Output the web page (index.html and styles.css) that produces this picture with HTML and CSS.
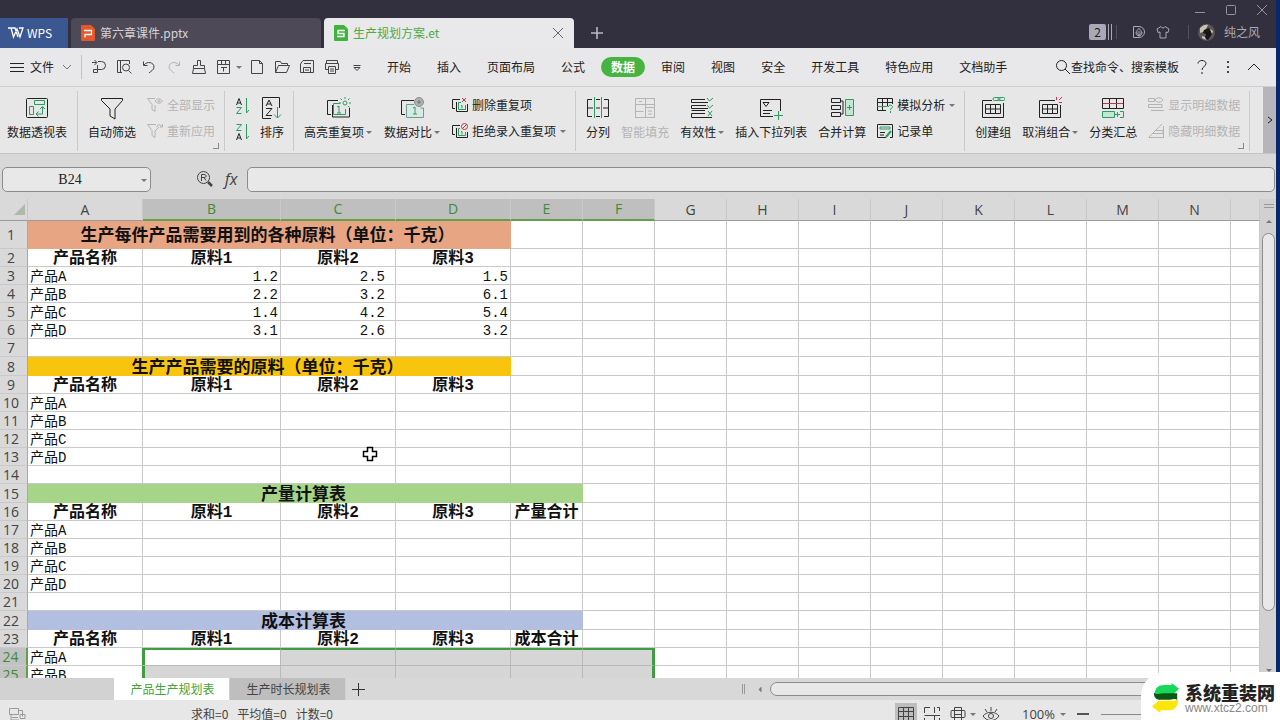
FILE: index.html
```html
<!DOCTYPE html>
<html lang="zh-CN">
<head>
<meta charset="utf-8">
<title>生产规划方案.et</title>
<link rel="stylesheet" href="styles.css">
</head>
<body>
<div class="app">
<header class="titlebar">
  <nav class="doctabs">
    <button class="doctab home"><svg class="i" width="17" height="14" viewBox="0 0 17 14"><path class="logo" d="M1 2h3l2.500 9L10 3l3 8 3-9h-4M4 2h4l3 9"/></svg>WPS</button>
    <button class="doctab"><svg width="14" height="16" viewBox="0 0 14 16"><path fill="#e5582b" d="M1 0h9l4 4v11a1 1 0 0 1-1 1H1a1 1 0 0 1-1-1V1a1 1 0 0 1 1-1z"/><path fill="none" stroke="#fff" stroke-width="1.300" d="M3 5.500h7.500v4H4v3"/></svg>第六章课件.pptx</button>
    <div class="doctab active"><svg width="14" height="16" viewBox="0 0 14 16"><path fill="#3eb43c" d="M1 0h9l4 4v11a1 1 0 0 1-1 1H1a1 1 0 0 1-1-1V1a1 1 0 0 1 1-1z"/><path fill="none" stroke="#fff" stroke-width="1.300" d="M11 5.500H4v3h6v3H3"/></svg><span class="grow">生产规划方案.et</span><button aria-label="关闭"><svg class="i" width="12" height="12" viewBox="0 0 12 12"><path d="M1 1l10 10M11 1L1 11"/></svg></button></div>
    <button class="newtab" aria-label="新建"><svg class="i" width="14" height="14" viewBox="0 0 14 14"><path stroke-width="1.600" d="M7 1v12M1 7h12"/></svg></button>
  </nav>
  <div class="titleright">
    <div class="winbtns">
      <button aria-label="最小化"><svg class="i" width="12" height="12" viewBox="0 0 12 12"><path d="M1 8.500h10"/></svg></button>
      <button aria-label="最大化"><svg class="i" width="12" height="12" viewBox="0 0 12 12"><rect x="1.500" y="1.500" width="9" height="9" rx="1"/></svg></button>
      <button aria-label="关闭窗口"><svg class="i" width="12" height="12" viewBox="0 0 12 12"><path d="M1 1l10 10M11 1L1 11"/></svg></button>
    </div>
    <div class="account">
      <span class="badge">2</span><svg class="i bars" width="5" height="16" viewBox="0 0 5 16"><path d="M1.500 0v16M4.500 0v16"/></svg>
      <i class="vline"></i>
      <button class="docer" aria-label="稻壳"><svg class="i" width="14" height="14" viewBox="0 0 14 14"><path d="M1.500 1.500H7a5.500 5.500 0 0 1 0 11H1.500zM7 3.500c3 2 3 5 0 7c-3-2-3-5 0-7M7 6v5M4 7c0 2 1 4 3 4s3-2 3-4"/></svg></button>
      <button aria-label="皮肤"><svg class="i" width="14" height="14" viewBox="0 0 14 14"><path d="M5 1.500L1 4l1 3.500 2-.5v6h6V7l2 .5L13 4 9 1.500C8 3.500 6 3.500 5 1.500z"/></svg></button>
      <i class="vline wide"></i>
      <svg class="avatar" width="17" height="17" viewBox="0 0 17 17"><circle cx="8.500" cy="8.500" r="8.500" fill="#5a5756"/><path fill="#c8c2b4" d="M2 4c3-3 6-4 8-3L8 5 5 8 2 9z"/><path fill="#171619" d="M6 6l5-2 3 6-4 6-3-2 1-4-3-1z"/><path fill="#c9c9b4" d="M4 12l3 1 1 3-4-2zM12 5l3 2-1 3z"/></svg>
      <span>纯之风</span>
    </div>
  </div>
</header>
<div class="menubar">
  <button class="file"><svg class="i" width="14" height="11" viewBox="0 0 14 11"><path d="M0 1.500h14M0 5.500h14M0 9.500h14"/></svg>文件<svg class="i thin" width="10" height="6" viewBox="0 0 10 6"><path d="M1 1l4 4 4-4"/></svg></button>
  <div class="quick">
    <button aria-label="转换"><svg class="i" width="16" height="16" viewBox="0 0 16 16"><path d="M1 3.500h4.500M3.500 1l2.500 2.500L3.500 6M7 2.500h3.500a4 4 0 0 1 0 8H6.500V6M6.500 10.500v3h-4v-3h4"/></svg></button>
    <button aria-label="打印预览"><svg class="i" width="16" height="16" viewBox="0 0 16 16"><path d="M6 13.500H1.500v-12h12V5M4.500 2v11M12.500 11.500l3 3"/><circle cx="10" cy="8.500" r="3.500"/></svg></button>
    <button aria-label="撤销"><svg class="i" width="16" height="16" viewBox="0 0 16 16"><path d="M2.500 2.500v4h4M3 6c3-4 10-3 10 2 0 3-3 4-5 6"/></svg></button>
    <button class="dim" aria-label="恢复"><svg class="i" width="16" height="16" viewBox="0 0 16 16"><path d="M13.500 2.500v4h-4M13 6C10 2 3 3 3 8c0 3 3 4 5 6"/></svg></button>
    <button aria-label="格式刷"><svg class="i" width="16" height="16" viewBox="0 0 16 16"><path d="M6.500 6.500v-5h3v5h4v3h-11v-3zM2.500 9.500l-1 5h13l-1-5"/></svg></button>
    <button class="drop" aria-label="表格格式"><svg class="i" width="16" height="16" viewBox="0 0 16 16"><path d="M1.500 1.500h12v13h-12zM1.500 5.500h12M5.500 1.500v4M9.500 1.500v4M5 8.500h6M7.500 8.500v4"/></svg><b class="caret"></b></button>
    <button aria-label="新建文件"><svg class="i" width="16" height="16" viewBox="0 0 16 16"><path d="M1.500 1.500h8l3 3v10h-11zM9.500 1.500v3h3"/></svg></button>
    <button aria-label="打开"><svg class="i" width="16" height="16" viewBox="0 0 16 16"><path d="M.5 13.500v-11h5l1 2h6v2M.5 13.500l3-7h11l-3 7z"/></svg></button>
    <button aria-label="保存"><svg class="i" width="16" height="16" viewBox="0 0 16 16"><path d="M.5 5L3 1.500h10.500v12H.5zM3.500 13.500v-5h7v5M4 4.500h7M5 11h4"/></svg></button>
    <button aria-label="打印"><svg class="i" width="16" height="16" viewBox="0 0 16 16"><path d="M1.500 4.500v-3h11v3M3 10.500H.5v-6h13v6H11M3.500 7.500h7v7h-7zM5 10h4M5 12h4"/></svg></button>
    <button aria-label="更多"><svg class="i" width="16" height="16" viewBox="0 0 16 16"><path d="M3.500 6.500h7M4 8.500l3 3 3-3z"/></svg></button>
  </div>
  <nav class="menus"><button>开始</button><button>插入</button><button>页面布局</button><button>公式</button><button class="on">数据</button><button>审阅</button><button>视图</button><button>安全</button><button>开发工具</button><button>特色应用</button><button>文档助手</button></nav>
  <label class="search"><svg class="i" width="16" height="16" viewBox="0 0 16 16"><circle cx="6.500" cy="6.500" r="5"/><path d="M10 10l5 5"/></svg><input type="text" placeholder="查找命令、搜索模板" aria-label="查找命令"></label>
  <div class="menuend">
    <button aria-label="帮助"><svg class="i" width="14" height="16" viewBox="0 0 14 16"><path d="M3 4.500c0-4 8-4 8 0 0 3-4 3-4 6.500M7 13v2"/></svg></button>
    <button aria-label="菜单"><svg width="14" height="14" viewBox="0 0 14 14"><path fill="#444" d="M6 1h2v2H6zM6 6h2v2H6zM6 11h2v2H6z"/></svg></button>
    <button aria-label="收起"><svg class="i" width="14" height="8" viewBox="0 0 14 8"><path d="M1 7l6-6 6 6"/></svg></button>
  </div>
</div>
<div class="ribbon">
  <section class="group first">
    <button class="big"><svg class="i" width="24" height="24" viewBox="0 0 24 24"><rect x="1.500" y="2.500" width="21" height="19" rx="1"/><path class="g" d="M9.500 4.500h10v4h-10zM4.500 10.500h4v8h-4zM17.500 11v7h-6M15 13l2.500-2.500L20 13M13.500 15.500L11 18l2.500 2.500"/></svg><span>数据透视表</span></button>
  </section>
  <section class="group corner">
    <button class="big"><svg class="i" width="24" height="24" viewBox="0 0 24 24"><path d="M1.500 2.500h21v2L15 13v10l-5-3v-7L1.500 4.500z"/></svg><span>自动筛选</span></button>
    <div class="pair dim">
      <button><svg class="i" width="16" height="16" viewBox="0 0 16 16"><path d="M8 1.500H.5L5 7.500v5l3 2V8M8 4c2-3 5-3 7.500 0-2 3-5 3-7.500 0"/><circle cx="12" cy="4" r="1"/></svg>全部显示</button>
      <button><svg class="i" width="16" height="16" viewBox="0 0 16 16"><path d="M9 1.500H.5L5 7.500v5l3 2V8l4-4M10 4c0-3 4-3 5 0M15.500 1v3H13"/></svg>重新应用</button>
    </div>
  </section>
  <section class="group">
    <div class="pair icons">
      <button aria-label="升序"><svg class="i" width="14" height="18" viewBox="0 0 14 18"><path d="M1.500 8L4 1.500 6.500 8M2.500 6h3"/><path class="g" d="M1.500 10.500h5l-5 6h5M11.500 1v15L14 13"/></svg></button>
      <button aria-label="降序"><svg class="i" width="14" height="18" viewBox="0 0 14 18"><path class="g" d="M1.500 1.500h5l-5 6h5M11.500 1v15L14 13"/><path d="M1.500 17L4 10.500 6.500 17M2.500 15h3"/></svg></button>
    </div>
    <button class="big"><svg class="i" width="24" height="24" viewBox="0 0 24 24"><path d="M11 22.500H2.500v-21h17V12M6 10L9 4l3 6M7 8h4M6 12.500h6l-6 7h6"/><path class="g" d="M17.500 11v11M14 18.500l3.500 3.500 3.500-3.500"/></svg><span>排序</span></button>
  </section>
  <section class="group loose">
    <button class="big"><svg class="i" width="26" height="24" viewBox="0 0 26 24"><path d="M13 4.500H2.500v14H6M24.500 12v9h-17V9"/><path class="g" d="M15 7.500H8.500v11h12V13M12 11l2-1v7m-2 0h4"/><circle class="g" cx="20" cy="7" r="2"/><path class="g" d="M20 1v2M14 7h2M24 7h2M15.500 2.500L17 4M24.500 2.500L23 4M23 10l1.500 1.500"/></svg><span>高亮重复项<b class="caret"></b></span></button>
    <button class="big"><svg class="i" width="26" height="24" viewBox="0 0 26 24"><path d="M15 4.500H2.500v14H6"/><path class="t" d="M15 8.500H7.500v13h17V12h-3"/><path class="g" d="M14 12l2-1v7m-2 0h4"/><circle cx="20" cy="6" r="4.500" fill="#aeb0b0" stroke="#8c9090"/><path stroke="#777" d="M18 6h4M20 4v4"/></svg><span>数据对比<b class="caret"></b></span></button>
    <div class="pair">
      <button><svg class="i" width="16" height="16" viewBox="0 0 16 16"><path d="M8 2.500H.5v9H3M15.500 7v7.500h-11V5"/><path class="g" d="M9 5.500H6.500v7h7V8M9 8.500h1v3"/><path class="r" d="M10 1l4 4M14 1l-4 4"/></svg>删除重复项</button>
      <button><svg class="i" width="16" height="16" viewBox="0 0 16 16"><path d="M8 2.500H.5v9H3M15.500 9v5.500h-11V5"/><path class="g" d="M8 5.500H6.500v7h7V9M9 8.500h1v3"/><circle class="r" cx="12.500" cy="3.500" r="3"/><path class="r" d="M10.500 5.500l4-4"/></svg>拒绝录入重复项<b class="caret"></b></button>
    </div>
  </section>
  <section class="group">
    <button class="big"><svg class="i" width="24" height="24" viewBox="0 0 24 24"><path d="M6 3.500H1.500v17H6M18 3.500h4.500v17H18M1.500 12H7M17 12h5.500M10 3.500h4M10 20.500h4M10 12h4"/><path class="g" d="M8.500 1v21M15.500 1v21"/></svg><span>分列</span></button>
    <button class="big dim"><svg class="i" width="24" height="24" viewBox="0 0 24 24"><rect x="2.500" y="2.500" width="19" height="19"/><path d="M2.500 8.500h19M2.500 15.500h8M12.500 2.500v19M12.500 11.500h9M15 15h4M15 18h4M6 5.500h3"/></svg><span>智能填充</span></button>
    <button class="big"><svg class="i" width="24" height="24" viewBox="0 0 24 24"><path d="M15 3.500H1.500v3H18M16 9.500H1.500v3H18M15 17.500H1.500v4H22M1.500 14.500H15"/><path class="g" d="M17 2l2.500 3L23 2M17 9l2.500 3L23 9M18 15l4 5M22 15l-4 5"/></svg><span>有效性<b class="caret"></b></span></button>
    <button class="big"><svg class="i" width="24" height="24" viewBox="0 0 24 24"><path d="M14 20.500H1.500v-17h20V15M4 6.500h6l-3 4zM4 14.500h9M4 17.500h7"/><path class="g" d="M19.500 15v9M15 19.500h9"/></svg><span>插入下拉列表</span></button>
    <button class="big"><svg class="i" width="24" height="24" viewBox="0 0 24 24"><path d="M1.500 2.500h9v4h-9zM1.500 9.500h9v4h-9zM1.500 16.500h9v4h-9zM11 5h2v13h-2"/><path class="g tint" d="M15.500 3.500h8v16h-8z"/><path class="g" d="M19.500 9v5M17 11.500h5"/></svg><span>合并计算</span></button>
    <div class="pair">
      <button><svg class="i" width="16" height="16" viewBox="0 0 16 16"><path d="M9 13.500H.5v-12h15V7M.5 5.500h15M5.500 1.500v12M10.500 1.500V9"/><path class="g" d="M.5 9.500h10M11.500 10c0-3 4-2 4 0 0 1-2 1-2 3M13.500 14v2"/></svg>模拟分析<b class="caret"></b></button>
      <button><svg class="i" width="16" height="16" viewBox="0 0 16 16"><path d="M9 14.500H.5v-13h15V14.500H13M3 9.500h5M3 12h4"/><path class="g" d="M3 4h10v2H3z"/><path class="g" stroke-width="2" d="M14 8l-5 6"/></svg>记录单</button>
    </div>
  </section>
  <section class="group corner">
    <button class="big"><svg class="i" width="24" height="24" viewBox="0 0 24 24"><path d="M11 4.500H1.500v17h21V7M4.500 8.500h15v9h-15zM4.500 13h15M9.500 8.500v9M14.500 8.500v9"/><rect class="g" x="12" y="1.500" width="7" height="3" rx="1.500"/><rect class="g" x="17" y="1.500" width="7" height="3" rx="1.500"/></svg><span>创建组</span></button>
    <button class="big"><svg class="i" width="24" height="24" viewBox="0 0 24 24"><path d="M17 4.500H1.500v17h21V9M4.500 8.500h15v9h-15zM4.500 13h15M9.500 8.500v9M14.500 8.500v9"/><path class="r" d="M18.500 1v3M24 1l-3 3M21 6.500h3"/></svg><span>取消组合<b class="caret"></b></span></button>
    <button class="big"><svg class="i" width="24" height="24" viewBox="0 0 24 24"><path d="M1.500 2.500h21v10h-21zM8.500 2.500v10M15.500 2.500v10"/><path class="r" d="M2 7.500h20"/><path class="g tint" d="M1.500 15.500h12v6h-12z"/><path class="g" d="M14 18.500h5M16.500 16v5M19 15.500h3.500v6H19"/></svg><span>分类汇总</span></button>
    <div class="pair dim">
      <button><svg class="i" width="16" height="16" viewBox="0 0 16 16"><path d="M.5 1.500h6v3h-6zM.5 7.500H14v3H.5zM3 13.500h13M7 3c2-3 6-3 8 0-2 3-6 3-8 0"/></svg>显示明细数据</button>
      <button><svg class="i" width="16" height="16" viewBox="0 0 16 16"><path d="M1 14L14 1M7 7.500h8v3H4M.5 14.500h15M15.500 3v12"/></svg>隐藏明细数据</button>
    </div>
  </section>
  <button class="more" aria-label="更多功能"><svg class="i" width="6" height="8" viewBox="0 0 6 8"><path d="M1 1l4 3-4 3"/></svg></button>
</div>
<div class="formula">
  <div class="namebox"><input type="text" value="B24" aria-label="名称框"><b class="caret"></b></div>
  <div class="fxbtns">
    <button aria-label="查找"><svg class="i" width="18" height="18" viewBox="0 0 18 18"><circle cx="7.500" cy="7.500" r="6"/><path d="M5.500 11V4.500H8c3 0 3 3 0 3H6M8 7.500l2 3"/><path stroke-width="2.500" d="M12 12l4 4"/></svg></button>
    <button class="fx">fx</button>
  </div>
  <input class="fxinput" type="text" aria-label="编辑栏">
</div>
<main class="sheet">
  <div class="gridwrap">
  <table class="grid">
    <colgroup><col class="c-head"><col class="c-a"><col class="c-b"><col class="c-a"><col class="c-a"><col class="c-n"><col class="c-n"><col class="c-n"><col class="c-n"><col class="c-n"><col class="c-n"><col class="c-n"><col class="c-n"><col class="c-n"><col class="c-n"><col></colgroup>
    <thead><tr><th><svg class="all" width="11" height="11" viewBox="0 0 11 11"><path fill="#b0b8ae" d="M11 0v11H0z"/></svg><th>A<th class="sel">B<th class="sel">C<th class="sel">D<th class="sel">E<th class="sel">F<th>G<th>H<th>I<th>J<th>K<th>L<th>M<th>N<th></tr></thead>
    <tbody>
    <tr class="tall"><th>1<td colspan="4" class="title orange">生产每件产品需要用到的各种原料（单位：千克）<td><td><td><td><td><td><td><td><td><td><td></tr>
    <tr class="names"><th>2<td>产品名称<td>原料1<td>原料2<td>原料3<td><td><td><td><td><td><td><td><td><td><td></tr>
    <tr><th>3<td>产品A<td class="num">1.2<td class="num inset">2.5<td class="num">1.5<td><td><td><td><td><td><td><td><td><td><td></tr>
    <tr><th>4<td>产品B<td class="num">2.2<td class="num inset">3.2<td class="num">6.1<td><td><td><td><td><td><td><td><td><td><td></tr>
    <tr><th>5<td>产品C<td class="num">1.4<td class="num inset">4.2<td class="num">5.4<td><td><td><td><td><td><td><td><td><td><td></tr>
    <tr><th>6<td>产品D<td class="num">3.1<td class="num inset">2.6<td class="num">3.2<td><td><td><td><td><td><td><td><td><td><td></tr>
    <tr><th>7<td><td><td><td><td><td><td><td><td><td><td><td><td><td><td></tr>
    <tr class="mid"><th>8<td colspan="4" class="title gold">生产产品需要的原料（单位：千克）<td><td><td><td><td><td><td><td><td><td><td></tr>
    <tr class="names"><th>9<td>产品名称<td>原料1<td>原料2<td>原料3<td><td><td><td><td><td><td><td><td><td><td></tr>
    <tr><th>10<td>产品A<td><td><td><td><td><td><td><td><td><td><td><td><td><td></tr>
    <tr><th>11<td>产品B<td><td><td><td><td><td><td><td><td><td><td><td><td><td></tr>
    <tr><th>12<td>产品C<td><td><td><td><td><td><td><td><td><td><td><td><td><td></tr>
    <tr><th>13<td>产品D<td><td><td><td><td><td><td><td><td><td><td><td><td><td></tr>
    <tr><th>14<td><td><td><td><td><td><td><td><td><td><td><td><td><td><td></tr>
    <tr class="mid"><th>15<td colspan="5" class="title green">产量计算表<td><td><td><td><td><td><td><td><td><td></tr>
    <tr class="names"><th>16<td>产品名称<td>原料1<td>原料2<td>原料3<td>产量合计<td><td><td><td><td><td><td><td><td><td></tr>
    <tr><th>17<td>产品A<td><td><td><td><td><td><td><td><td><td><td><td><td><td></tr>
    <tr><th>18<td>产品B<td><td><td><td><td><td><td><td><td><td><td><td><td><td></tr>
    <tr><th>19<td>产品C<td><td><td><td><td><td><td><td><td><td><td><td><td><td></tr>
    <tr><th>20<td>产品D<td><td><td><td><td><td><td><td><td><td><td><td><td><td></tr>
    <tr><th>21<td><td><td><td><td><td><td><td><td><td><td><td><td><td><td></tr>
    <tr class="mid"><th>22<td colspan="5" class="title blue">成本计算表<td><td><td><td><td><td><td><td><td><td></tr>
    <tr class="names"><th>23<td>产品名称<td>原料1<td>原料2<td>原料3<td>成本合计<td><td><td><td><td><td><td><td><td><td></tr>
    <tr class="top"><th class="sel">24<td class="edge">产品A<td class="s l cur"><td class="s"><td class="s"><td class="s"><td class="s r"><td><td><td><td><td><td><td><td><td></tr>
    <tr><th class="sel">25<td class="edge">产品B<td class="s l"><td class="s"><td class="s"><td class="s"><td class="s r"><td><td><td><td><td><td><td><td><td></tr>
    </tbody>
  </table>
  <svg class="cursor" width="16" height="16" viewBox="0 0 16 16"><path fill="#fff" stroke="#000" stroke-width="1.500" d="M5.500 1.500h5v4h4v5h-4v4h-5v-4h-4v-5h4z"/></svg>
  </div>
  <div class="vscroll"><i class="split"></i><b class="caret up"></b><i class="thumb"></i><b class="caret"></b></div>
</main>
<div class="sheetbar">
  <div class="sheettabs"><i class="blank"></i><button class="on">产品生产规划表</button><button>生产时长规划表</button><button class="add" aria-label="新建工作表"><svg class="i" width="14" height="14" viewBox="0 0 14 14"><path d="M7.500 1v13M1 7.500h13"/></svg></button></div>
  <div class="hscroll"><i class="grip"></i><b class="caret left"></b><i class="thumb"></i></div>
</div>
<footer class="status">
  <svg class="i faint" width="18" height="16" viewBox="0 0 18 16"><path d="M1.500 2.500h9v6h-9zM4 11.500h6M3 9v5h8M10.500 4.500h4v6M12 8.500h5v4h-5z"/></svg>
  <output class="sums"><span>求和=0</span><span>平均值=0</span><span>计数=0</span></output>
  <div class="views">
    <button class="on" aria-label="普通视图"><svg class="i" width="18" height="16" viewBox="0 0 18 16"><path d="M1.500 1.500h15v13h-15zM1.500 5.500h15M1.500 10.500h15M6.500 1.500v13M11.500 1.500v13"/></svg></button>
    <button aria-label="分页预览"><svg class="i" width="18" height="16" viewBox="0 0 18 16"><path d="M7 1.500H1.500V7M16.500 5V1.500H14M11.500 1v6M1.500 9.500H17M1.500 12v2.500H7M11.500 9.500v5M16.500 12v2.500H14"/></svg></button>
    <button class="drop" aria-label="阅读布局"><svg class="i" width="18" height="16" viewBox="0 0 18 16"><path d="M5.500 4.500v-3h7v3M5.500 11.500v3h7v-3M3 4.500h12a1 1 0 0 1 1 1v5a1 1 0 0 1-1 1H3a1 1 0 0 1-1-1v-5a1 1 0 0 1 1-1zM5.500 8.500h7M5.500 4.500v7M12.500 4.500v7"/></svg><b class="caret"></b></button>
    <button aria-label="护眼模式"><svg class="i" width="18" height="16" viewBox="0 0 18 16"><path d="M1 10c4-5 12-5 16 0-4 6-12 6-16 0M9 1v4M3 3l2 3M15 3l-2 3"/><circle cx="9" cy="10" r="2.500"/></svg></button>
  </div>
  <button class="zoom">100%<b class="caret"></b></button>
  <i class="minus"></i><i class="track"></i>
</footer>
</div>
<aside class="mark">
  <svg width="28" height="32" viewBox="0 0 30 32"><path fill="#18d85a" d="M3 12C3 5 7 2 13 2h8V0l8 6-6 6H12c-5 0-7 0-9 3z"/><path fill="#0b5a14" d="M2 10c3 3 7 1 11 1h14v7c-3-2-6 0-10 0H9c-4 0-7-2-7-8z"/><path fill="#fbe50a" d="M28 17c0 8-4 12-9 12H9v3l-9-7 7-6h12c5 0 7 0 9-2z"/></svg>
  <div><strong>系统重装网</strong><span>www.xtcz2.com</span></div>
</aside>
</body>
</html>
```
FILE: styles.css
```css
* { box-sizing: border-box; }
body { margin: 0; height: 100vh; overflow: hidden; background: #06286c; font: 12px/16px "Noto Sans CJK SC", sans-serif; color: #222; position: relative; }
button { font: inherit; color: inherit; background: none; border: 0; padding: 0; display: flex; align-items: center; justify-content: center; white-space: nowrap; }
input { font: inherit; color: inherit; border: 0; padding: 0; background: none; outline: 0; min-width: 0; }
svg { flex: none; display: block; }
.i { fill: none; stroke: currentColor; }
.i .g { stroke: #2c9c64; }
.i .tint { fill: #c5e6d2; }
.i .t { stroke: #6f9c92; fill: #dbe9e4; }
.i .r { stroke: #c8344e; }
.caret { display: inline-block; flex: none; border: 3px solid transparent; border-top-color: #777; border-bottom: 0; }
.dim { color: #b4b4b4; }

.app { display: flex; flex-direction: column; height: calc(100vh + 8px); margin-right: 4px; background: #e7e7e7; }

.titlebar { display: flex; height: 48px; flex: none; background: #322f3e; color: #b9b7c2; justify-content: space-between; }
.doctabs { display: flex; align-items: flex-end; gap: 3px; }
.doctab { height: 30px; width: 250px; display: flex; align-items: center; justify-content: flex-start; gap: 5px; padding: 0 10px; border-radius: 4px 4px 0 0; background: #4d4957; color: #d5d3da; }
.doctab.home { width: 68px; background: #3a5792; color: #fff; padding: 0 7px; gap: 3px; border-radius: 0; }
.doctab.active { background: #e9e8ea; color: #4cab45; }
.doctab.active button { color: #666; }
.logo { stroke-width: 1.3; }
.grow { flex: 1; }
.newtab { width: 40px; height: 30px; }
.titleright { display: flex; flex-direction: column; align-items: flex-end; }
.winbtns { display: flex; gap: 19px; height: 20px; padding-right: 8px; color: #96939f; }
.account { display: flex; align-items: center; height: 24px; padding-right: 16px; color: #aaa8b2; }
.badge { width: 17px; height: 16px; border-radius: 2px; background: #aaa8b4; color: #222; text-align: center; margin-right: 1px; }
.vline { width: 1px; height: 14px; background: #54505f; margin: 0 15px 0 4px; }
.docer { margin-right: 10px; }
.vline.wide { margin: 0 9px 0 18px; }
.avatar { margin-right: 9px; }

.menubar { display: flex; align-items: center; height: 39px; flex: none; background: #e8e7e9; border-bottom: 1px solid #cfcfcf; }
.file { padding: 0 9px 0 10px; gap: 6px; height: 24px; border-right: 1px solid #c2c2c2; }
.thin { margin-left: 2px; color: #777; }
.quick { display: flex; gap: 9px; margin-left: 9px; color: #444; }
.drop { position: relative; }
.drop .caret { position: absolute; left: 20px; top: 7px; }
.quick .drop { margin-right: 9px; }
.menus { display: flex; gap: 6px; margin-left: 11px; }
.menus button { height: 20px; padding: 0 10px; border-radius: 10px; }
.menus .on { background: #45b441; color: #fff; font-weight: bold; }
.search { display: flex; align-items: center; margin-left: auto; }
.search input { width: 112px; }
.search input::placeholder { color: #222; opacity: 1; }
.menuend { display: flex; align-items: center; gap: 12px; margin-left: 12px; padding-right: 15px; }

.ribbon { display: flex; flex: none; height: 67px; background: #e7e7e7; border-bottom: 1px solid #c4c4c4; }
.group { position: relative; display: flex; gap: 11px; padding: 5px 9px 0 10px; border-right: 1px solid #cacaca; margin: 4px 0 2px; flex: none; }
.group.first { padding: 5px 10px 0 7px; }
.group.loose { gap: 12px; }
.corner::after { content: ""; position: absolute; right: 5px; bottom: 2px; width: 5px; height: 5px; border: solid #888; border-width: 0 1px 1px 0; }
.big { flex-direction: column; justify-content: flex-start; gap: 4px; height: 44px; }
.big span { display: flex; align-items: center; gap: 2px; }
.pair { display: flex; flex-direction: column; gap: 10px; padding-top: 1px; }
.pair button { gap: 4px; height: 16px; justify-content: flex-start; }
.pair.icons button { height: 18px; }
.pair.icons { gap: 8px; }
.more { margin-left: auto; width: 13px; background: #b7b5bc; }

.formula { display: flex; align-items: center; flex: none; height: 45px; padding: 5px 1px 0 2px; background: #d8d8d8; }
.namebox, .fxinput { height: 25px; border: 1px solid #8c8c8c; border-radius: 5px; background: #e8e8e8; }
.namebox { display: flex; align-items: center; width: 149px; padding: 2px 3px 0 0; }
.namebox input { flex: 1; text-align: center; padding-right: 4px; font: 14px/20px "Liberation Serif", serif; }
.fxbtns { display: flex; align-items: center; gap: 9px; margin: 0 8px 0 45px; color: #444; }
.fx { font: italic 16px/20px "Open Sans", sans-serif; width: 16px; }
.fxinput { flex: 1; }

.sheet { display: flex; flex: 1; min-height: 0; overflow: hidden; background: #d8d8d8; }
.gridwrap { flex: 1; min-width: 0; overflow: hidden; position: relative; }
.grid { width: 100%; table-layout: fixed; border-collapse: separate; border-spacing: 0; }
.c-head { width: 28px; }
.c-a { width: 115px; }
.c-b { width: 138px; }
.c-n { width: 72px; }
.grid th, .grid td { height: 18px; white-space: nowrap; border: solid #c9c9c9; border-width: 0 1px 1px 0; }
.grid td { padding: 4px 2px 0; background: #fff; color: #111; font: 14px/13px "Liberation Mono", "Noto Sans CJK SC", monospace; }
.grid th { padding: 0 2px; background: #d9d9d9; color: #444; font: 14px/17px "Open Sans", sans-serif; }
.grid thead th { height: 22px; line-height: 20px; border-bottom-color: #9a9a9a; }
.grid tbody th { padding: 0 5px 0 0; border-right-color: #a8a8a8; }
.grid thead .sel { background: #bfbfbf; color: #43893a; border-bottom: 2px solid #62a04a; }
.grid tbody .sel { background: #c2c2c2; color: #43893a; border-right: 2px solid #62a04a; }
.grid .all { margin-left: auto; }
.grid .tall > * { height: 28px; }
.grid .mid > * { height: 19px; }
.grid .names td { font-size: 16px; font-weight: bold; text-align: center; padding: 4px 0 0; }
.grid .title { font-size: 17px; font-weight: bold; text-align: center; padding: 4px 3px 0 0; }
.grid .orange { background: #e8a583; border-color: #e8a583; }
.grid .gold { background: #f8c40e; border-color: #f8c40e; }
.grid .green { background: #a6d58a; border-color: #a6d58a; }
.grid .blue { background: #b3bfe0; border-color: #b3bfe0; }
.grid .num { text-align: right; }
.grid .inset { padding-right: 10px; }
.grid .edge { border-right-color: #3f9c40; }
.grid .s { background: #d6d6d6; border-color: #b9b9b9; }
.grid .cur { background: #fff; }
.grid .l { box-shadow: inset 2px 0 #3f9c40; }
.grid .r { border-right: 3px solid #3f9c40; }
.grid .top .s { border-top: 2px solid #3f9c40; }
.cursor { position: absolute; left: 362px; top: 247px; }
.vscroll { display: flex; flex-direction: column; align-items: center; width: 16px; background: #d2d0d2; padding: 5px 1px 6px 2px; }
.split { width: 10px; height: 4px; border: solid #999; border-width: 1px 0; margin-bottom: 12px; }
.up { transform: rotate(180deg); }
.vscroll .thumb { width: 100%; height: 378px; margin: 10px 0 auto; border: 1px solid #8c8c8c; border-radius: 7px; background: #e8e8e8; }

.sheetbar { display: flex; flex: none; height: 22px; background: #d8d8d8; }
.sheettabs { display: flex; width: 742px; }
.blank { width: 114px; background: #d2d2d2; }
.sheettabs button { width: 116px; padding-left: 2px; background: #bebebe; color: #444; border-right: 1px solid #d0d0d0; }
.sheettabs .on { background: #fff; color: #3ea53a; }
.sheettabs .add { width: 24px; padding: 0; background: none; border: 0; color: #333; }
.hscroll { display: flex; flex: 1; align-items: center; }
.grip { width: 3px; height: 10px; border: solid #999; border-width: 0 1px; margin-right: 12px; }
.left { transform: rotate(90deg); }
.hscroll .thumb { flex: 1; height: 14px; margin-left: 7px; border: 1px solid #8c8c8c; border-radius: 7px; background: #e8e8e8; }

.status { display: flex; align-items: center; flex: none; height: 28px; padding-left: 8px; background: #e7e7e7; color: #444; }
.faint { color: #999; }
.sums { display: flex; gap: 9px; margin-left: 165px; }
.views { display: flex; gap: 4px; margin-left: auto; padding-right: 20px; }
.views button { width: 22px; height: 22px; }
.views .on { background: #bdbdbd; }
.views .drop { margin-right: 7px; }
.views .drop .caret { left: 23px; top: 10px; }
.zoom { gap: 5px; font: 13px/16px "Open Sans", sans-serif; }
.minus { width: 12px; height: 2px; background: #555; margin: 0 12px 0 11px; }
.track { width: 175px; height: 1px; background: #888; }

.mark { position: absolute; right: 0; bottom: 0; display: flex; align-items: center; gap: 5px; width: 139px; height: 48px; padding: 4px 3px 0 11px; border-radius: 24px 0 0 0; background: #fff; }
.mark div { display: flex; flex-direction: column; }
.mark strong { font-size: 18px; line-height: 18px; font-weight: 900; white-space: nowrap; }
.mark span { margin-top: 1px; font: 12px/12px "Liberation Sans", sans-serif; color: #888; }
```
